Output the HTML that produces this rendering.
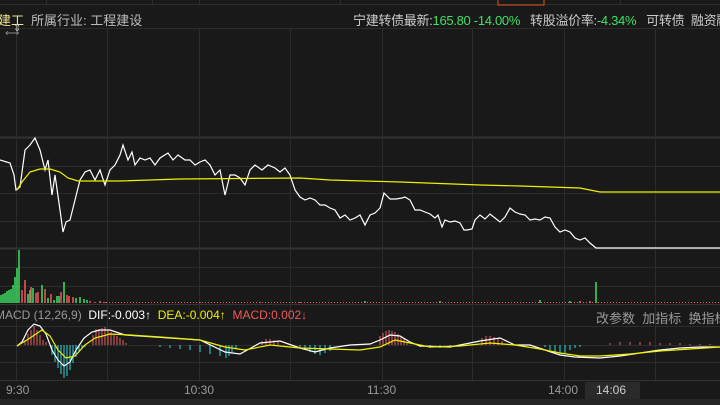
<!DOCTYPE html>
<html><head><meta charset="utf-8"><style>
body{margin:0;background:#191919;width:720px;height:405px;overflow:hidden;font-family:"Liberation Sans","Noto Sans CJK SC",sans-serif;position:relative}
svg{position:absolute;left:0;top:0}
.t{position:absolute;font-size:12px;white-space:nowrap}
</style></head><body>
<svg width="720" height="405">
<rect width="720" height="405" fill="#191919"/>
<g stroke="#2c2c2c" stroke-width="1">
<line x1="0" y1="4.5" x2="720" y2="4.5"/>
<line x1="0" y1="28.5" x2="720" y2="28.5"/>
<line x1="0" y1="137.5" x2="720" y2="137.5" stroke="#333" stroke-width="2"/>
<line x1="0" y1="166.5" x2="720" y2="166.5"/>
<line x1="0" y1="193.5" x2="720" y2="193.5"/>
<line x1="0" y1="221.5" x2="720" y2="221.5"/>
<line x1="0" y1="248.5" x2="720" y2="248.5" stroke="#333" stroke-width="2"/>
<line x1="0" y1="267.5" x2="720" y2="267.5"/>
<line x1="0" y1="286.5" x2="720" y2="286.5"/>
<line x1="0" y1="304.5" x2="720" y2="304.5" stroke="#333"/>
<line x1="0" y1="326.5" x2="720" y2="326.5"/>
<line x1="0" y1="345.5" x2="720" y2="345.5"/>
<line x1="0" y1="362.5" x2="720" y2="362.5"/>
<line x1="0" y1="380.5" x2="720" y2="380.5" stroke="#333"/>
<line x1="16.5" y1="28" x2="16.5" y2="380"/>
<line x1="107.5" y1="28" x2="107.5" y2="380"/>
<line x1="199.5" y1="28" x2="199.5" y2="380"/>
<line x1="290.5" y1="28" x2="290.5" y2="380"/>
<line x1="382.5" y1="28" x2="382.5" y2="380"/>
<line x1="472.5" y1="28" x2="472.5" y2="380"/>
<line x1="564.5" y1="28" x2="564.5" y2="380"/>
<line x1="655.5" y1="28" x2="655.5" y2="380"/>
<line x1="46.5" y1="0" x2="46.5" y2="4"/><line x1="152.5" y1="0" x2="152.5" y2="4"/><line x1="199.5" y1="0" x2="199.5" y2="4"/><line x1="340.5" y1="0" x2="340.5" y2="4"/><line x1="620.5" y1="0" x2="620.5" y2="4"/>
</g>
<rect x="498" y="-2" width="46" height="7" fill="none" stroke="#e0501c"/>
<rect x="0" y="399" width="720" height="6" fill="#252525"/>
<rect x="585" y="382" width="55" height="17" fill="#2a2a2a"/>
<polyline fill="none" stroke="#fff" stroke-width="1.2" points="0,160 10,163 14,175 16,190 20,187 25,150 30,145 35,138 40,150 45,170 48,160 52,195 55,175 60,210 63,232 66,222 70,220 75,200 80,180 85,172 90,170 95,180 100,170 105,185 110,170 115,165 120,155 123,145 128,160 132,152 135,165 140,158 145,160 150,158 155,165 160,158 168,153 173,160 178,155 185,160 190,160 195,165 200,162 205,160 210,165 215,175 220,170 225,195 230,175 235,175 240,178 245,185 250,170 255,165 262,170 268,165 275,168 280,172 285,168 290,175 295,190 300,197 305,200 310,198 315,200 320,205 325,205 330,208 335,210 340,218 345,215 350,220 355,218 360,215 365,225 370,215 375,213 380,208 384,193 390,199 396,199 402,198 405,197 410,200 415,210 420,210 425,212 430,214 435,218 438,215 442,227 445,220 450,222 455,221 460,223 464,230 467,230 472,229 475,220 480,215 485,219 490,214 495,218 500,222 505,217 510,208 515,212 520,214 525,215 530,220 535,219 540,220 545,217 550,218 555,227 560,232 565,230 570,232 575,238 580,240 585,238 590,243 596,248 720,248"/>
<polyline fill="none" stroke="#f0f000" stroke-width="1.2" points="17,190 22,182 30,172 40,169 50,169 60,172 68,178 78,181 120,181 180,179 300,178 330,180 400,182 480,185 520,186 550,187 580,188 590,190 600,192 720,192"/>
<g stroke-width="1.5">
<path stroke="#3fe065" d="M1,303V295M3,303V294M5,303V293M7,303V291M9,303V290M11,303V289M13,303V285M15,303V277M17,303V268M19,303V250M28,303V294M30,303V290M33,303V288M42,303V285M48,303V298M54,303V300M57,303V296M59,303V296M64,303V282M76,303V298M80,303V297M84,303V299M87,303V300M365,303V301M440,303V301M596,303V282M540,303V300M570,303V301"/>
<path stroke="#f05a5a" d="M22,303V290M25,303V280M31,303V287M36,303V293M38,303V292M45,303V289M51,303V294M61,303V292M67,303V295M69,303V296M73,303V297M90,303V301M95,303V302M100,303V301M105,303V302M200,303V302M260,303V302M300,303V302M580,303V301M590,303V301"/>
<path stroke="#f05a5a" stroke-width="1" stroke-dasharray="1 2" d="M100,302.5H720"/>
</g>
<g stroke-width="1">
<path stroke="#f06060" d="M25,345V340M28,345V334M31,345V330M34,345V326M37,345V330M40,345V335M43,345V340M46,345V342M93,345V335M96,345V329M99,345V329M102,345V328M105,345V327M108,345V330M111,345V332M114,345V334M117,345V336M120,345V338M123,345V340M126,345V343M380,345V336M383,345V333M386,345V331M389,345V330M392,345V331M395,345V332M398,345V334M401,345V336M404,345V339M407,345V342M262,345V341M266,345V339M270,345V339M274,345V340M278,345V342M482,345V338M486,345V336M490,345V336M494,345V337M498,345V338M502,345V341M610,345V343M620,345V342M630,345V342M640,345V342M650,345V342M660,345V343M670,345V343M680,345V343M690,345V344M700,345V344M710,345V344"/>
<path stroke="#2ad6e0" d="M52,345V355M55,345V362M58,345V368M61,345V374M64,345V378M67,345V376M70,345V370M73,345V363M76,345V357M79,345V352M82,345V349M85,345V347M160,345V347M170,345V348M180,345V349M190,345V350M200,345V352M210,345V354M220,345V356M226,345V358M229,345V356M232,345V352M236,345V349M300,345V348M305,345V350M310,345V352M315,345V354M320,345V355M325,345V353M330,345V351M420,345V347M430,345V348M440,345V348M450,345V347M545,345V347M550,345V350M555,345V352M560,345V354M565,345V353M570,345V350M575,345V348M580,345V347"/>
</g>
<polyline fill="none" stroke="#fff" stroke-width="1.2" points="17,346 22,342 28,330 34,324 40,326 46,334 52,350 58,360 64,366 70,362 76,350 84,338 92,332 100,330 110,330 125,335 140,336 170,338 200,340 225,352 240,354 260,343 280,341 300,348 315,352 330,348 350,345 370,344 380,340 390,335 400,336 410,342 420,346 450,347 480,341 500,338 515,345 530,345 545,350 560,355 575,357 600,358 620,356 640,353 660,350 680,348 700,347 720,347"/>
<polyline fill="none" stroke="#f0f000" stroke-width="1.2" points="17,346 30,338 42,330 50,336 58,350 66,358 75,356 85,345 95,338 110,334 130,335 160,337 200,340 225,347 245,350 270,345 300,348 330,349 360,350 380,347 395,340 410,343 430,347 460,346 490,343 515,345 540,349 560,353 580,356 600,356 630,354 660,351 690,349 720,347"/>
</svg>
<div class="t" style="left:-2px;top:10px;color:#f0e68c;font-size:13px">建工</div>
<div class="t" style="left:31px;top:10px;color:#bbb;font-size:13px">所属行业: 工程建设</div>
<div class="t" style="left:5px;top:28px;color:#888;font-size:10px">⟷</div>
<div class="t" style="left:13px;top:23px;color:#ccc;font-size:10px">⇕</div>
<div class="t" style="left:353px;top:10px;color:#ccc;font-size:13px;letter-spacing:-0.3px">宁建转债最新:<span style="color:#3fe065">165.80 -14.00%</span>&nbsp;&nbsp; 转股溢价率:<span style="color:#3fe065">-4.34%</span>&nbsp;&nbsp; 可转债&nbsp; 融资融券</div>
<div class="t" style="left:-5px;top:308px;color:#999">MACD (12,26,9)&nbsp; <span style="color:#fff">DIF:-0.003↑</span>&nbsp; <span style="color:#f0f000">DEA:-0.004↑</span>&nbsp; <span style="color:#f05a5a">MACD:0.002↓</span></div>
<div class="t" style="left:596px;top:308px;color:#999;font-size:13px">改参数&nbsp; 加指标&nbsp; 换指标</div>
<div class="t" style="left:6px;top:383px;color:#999">9:30</div>
<div class="t" style="left:184px;top:383px;color:#999">10:30</div>
<div class="t" style="left:367px;top:383px;color:#999">11:30</div>
<div class="t" style="left:548px;top:383px;color:#999">14:00</div>
<div class="t" style="left:596px;top:383px;color:#ccc">14:06</div>
</body></html>
